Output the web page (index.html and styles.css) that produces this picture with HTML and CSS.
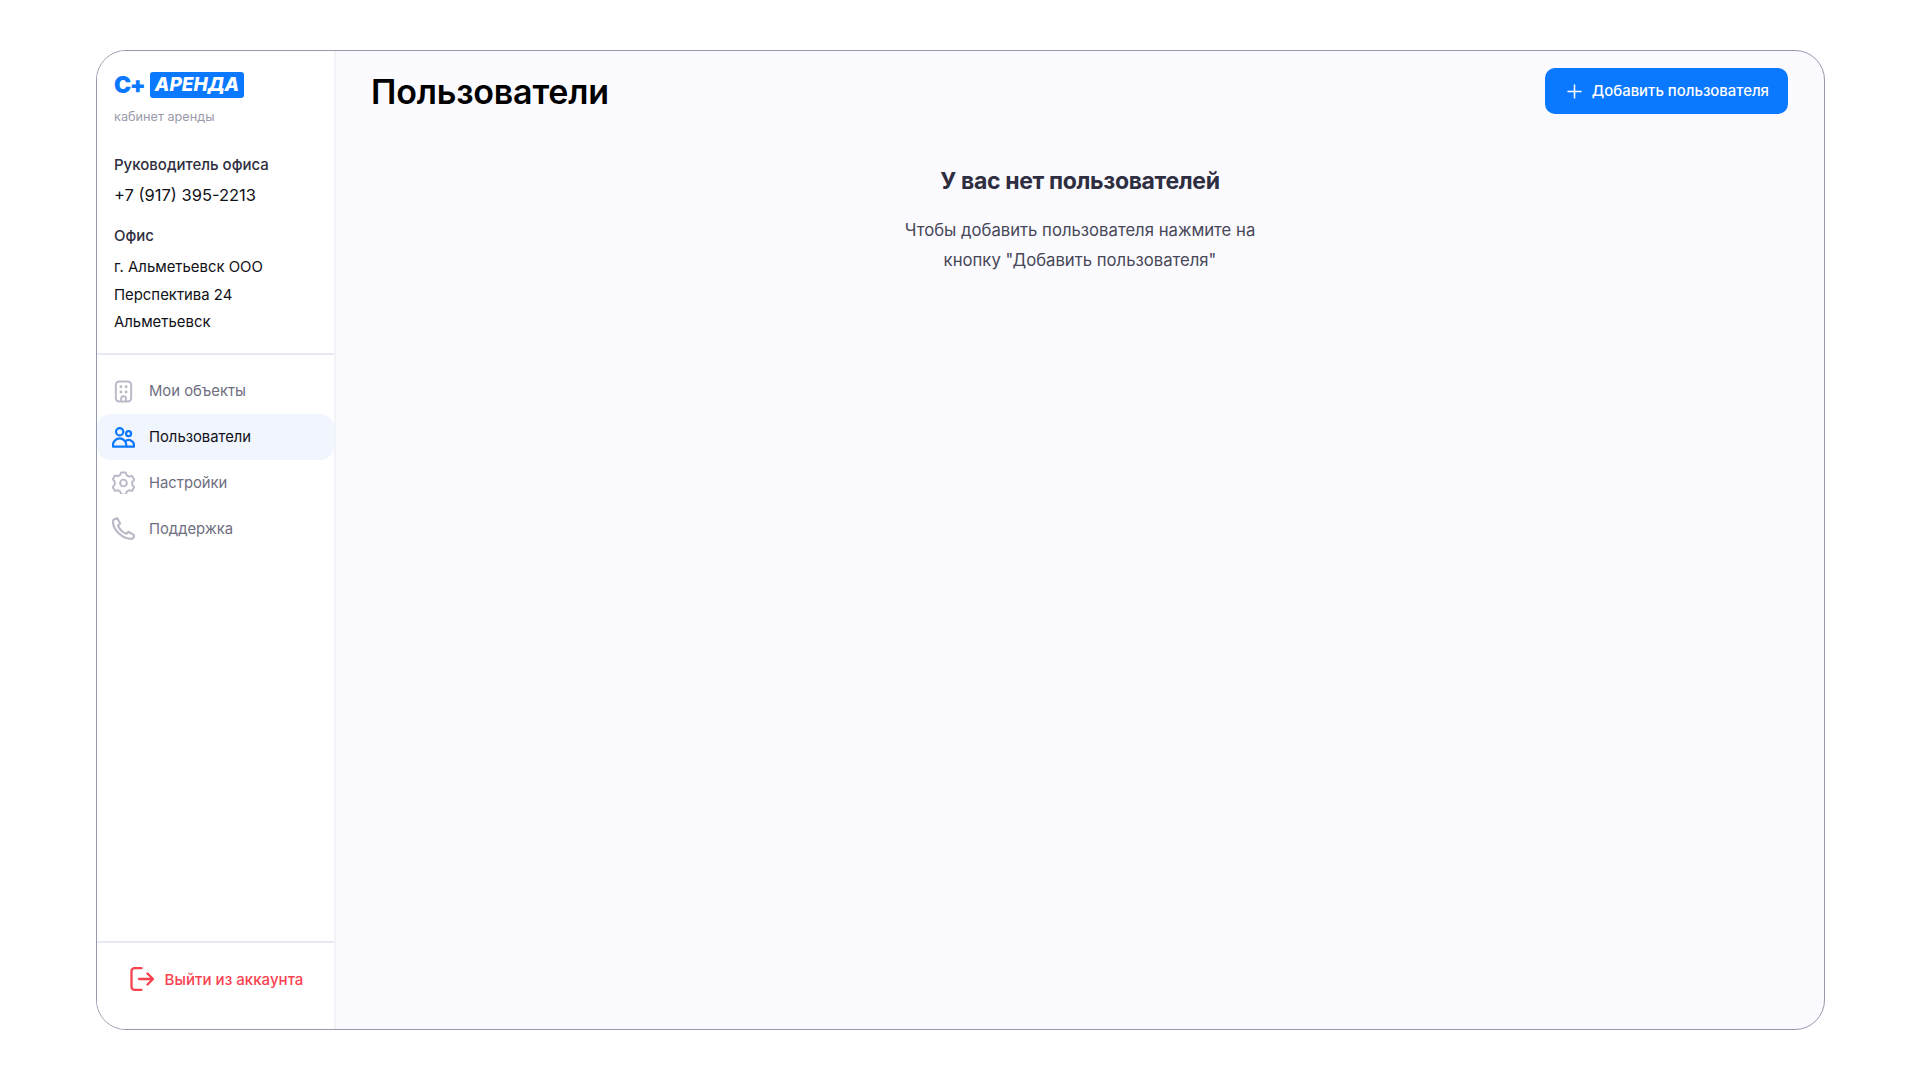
FILE: index.html
```html
<!DOCTYPE html>
<html lang="ru">
<head>
	<meta charset="utf-8">
	<title>Пользователи</title>
	<link rel="stylesheet" href="styles.css">
</head>
<body>
	<div class="frame">
		<aside class="sidebar">
			<div class="sidebar-top">
				<div class="logo"><span class="logo-mark">С+</span><span class="logo-badge">АРЕНДА</span></div>
				<div class="logo-sub">кабинет аренды</div>
				<div class="info-label">Руководитель офиса</div>
				<div class="info-phone">+7 (917) 395-2213</div>
				<div class="info-label info-label-office">Офис</div>
				<div class="info-line info-line-first">г. Альметьевск ООО</div>
				<div class="info-line">Перспектива 24</div>
				<div class="info-line">Альметьевск</div>
			</div>
			<ul class="nav">
				<li class="nav-item">
					<svg class="nav-icon" viewBox="0 0 24 24" fill="none" stroke="#b9b9c8" stroke-width="2"><rect x="4" y="1.500" width="16" height="21" rx="3.500"/><path d="M9.500 22.500v-3a2.500 2.500 0 0 1 5 0v3"/><g fill="#b9b9c8" stroke="none"><circle cx="9.300" cy="7" r="1.500"/><circle cx="14.700" cy="7" r="1.500"/><circle cx="9.300" cy="12.500" r="1.500"/><circle cx="14.700" cy="12.500" r="1.500"/></g></svg>
					Мои объекты
				</li>
				<li class="nav-item active">
					<svg class="nav-icon" viewBox="0 0 24 24" fill="none" stroke="#0a78ff" stroke-width="2.300"><circle cx="8" cy="6" r="3.800"/><circle cx="17.300" cy="8" r="2.600"/><path d="M1 21.500v-1.500a7 7 0 0 1 14 0v1.500z" stroke-linejoin="round"/><path d="M15 21.500h8v-1.500a5.500 5.500 0 0 0-9.200-4" stroke-linejoin="round"/></svg>
					Пользователи
				</li>
				<li class="nav-item">
					<svg class="nav-icon" viewBox="0 0 24 24" fill="none" stroke="#b9b9c8" stroke-width="2" stroke-linejoin="round"><path d="M9.600 1.500h4.800l1 3 2.500 1.400 3-.7 2.300 4-2.100 2.300v3l2.100 2.300-2.300 4-3-.7-2.500 1.400-1 3H9.600l-1-3-2.500-1.400-3 .7-2.300-4L2.900 14v-3L.8 8.700l2.300-4 3 .7 2.500-1.400z"/><circle cx="12" cy="12.500" r="3.500"/></svg>
					Настройки
				</li>
				<li class="nav-item">
					<svg class="nav-icon" viewBox="0 0 24 24" fill="none" stroke="#b9b9c8" stroke-width="2.200" stroke-linejoin="round"><path d="M2 2.500 5.500 1.200l3 5.500-2.300 2.100c1.300 3.600 4.500 7 8.600 8.800l2.400-2.200 5.700 3.600c.4 1.600-.8 3.800-2.400 3.800C10.500 22.800 1 13 1 5c0-.9.300-1.900 1-2.500z"/></svg>
					Поддержка
				</li>
			</ul>
			<div class="sidebar-bottom">
				<div class="logout">
					<svg class="logout-icon" viewBox="0 0 24 24" fill="none" stroke="#f8414f" stroke-width="2.300" stroke-linecap="round" stroke-linejoin="round"><path d="M11.500 1.200H4.500a3 3 0 0 0-3 3v15.600a3 3 0 0 0 3 3h7"/><path d="M9 12h14M17.500 6.500 23 12l-5.500 5.500"/></svg>
					Выйти из аккаунта
				</div>
			</div>
		</aside>
		<main class="content">
			<header class="content-head">
				<h1 class="page-title">Пользователи</h1>
				<button class="add-btn">
					<svg class="add-icon" viewBox="0 0 16 16" fill="none" stroke="#ffffff" stroke-width="1.700"><path d="M8 .5v15M.5 8h15"/></svg>
					Добавить пользователя
				</button>
			</header>
			<section class="empty">
				<h2 class="empty-title">У вас нет пользователей</h2>
				<p class="empty-text">Чтобы добавить пользователя нажмите на<br>кнопку "Добавить пользователя"</p>
			</section>
		</main>
	</div>
</body>
</html>
```

FILE: styles.css
```css
* { box-sizing: border-box; }
html, body { height: 100%; }
body { margin: 0; padding: 50px 95px 50px 96px; background: #ffffff; color: #000000;
	font-family: Inter, "Liberation Sans", sans-serif; }

.frame { display: flex; height: 980px; border: 1px solid #9499ad; border-radius: 30px;
	overflow: hidden; background: #fafaff; }

.sidebar { display: flex; flex-direction: column; width: 239px; flex: none; background: #ffffff;
	border-right: 2px solid #f2f2f9; }
.sidebar-top { height: 304px; padding: 21px 17px 0; border-bottom: 2px solid #e9e9f4; }

.logo { display: flex; align-items: center; height: 26px; gap: 7px; }
.logo-mark { width: 29px; flex: none; font-size: 23px; line-height: 26px; font-weight: 900; color: #0a78ff; letter-spacing: -1.500px; }
.logo-badge { width: 94px; height: 26px; border-radius: 3px; background: #0a78ff; color: #ffffff;
	font-size: 19px; line-height: 26px; font-weight: 800; font-style: italic; text-align: center; }
.logo-sub { margin-top: 10px; margin-bottom: 27px; font-size: 12.700px; line-height: 18px; color: #9b9bab; }

.info-label { font-size: 15px; line-height: 24px; font-weight: 500; color: #2e2e40; }
.info-label-office { margin-top: 16px; }
.info-phone { margin-top: 6px; font-size: 16.500px; line-height: 25px; color: #111118; }
.info-line { margin-top: 2.500px; font-size: 14.900px; line-height: 25px; color: #111118; }
.info-line-first { margin-top: 7px; }

.nav { flex: 1; margin: 0; padding: 13.500px 0 0; list-style: none; }
.nav-item { display: flex; align-items: center; height: 45.800px; padding-left: 15px; gap: 14px;
	font-size: 14.800px; color: #6e6e80; }
.nav-item.active { background: #f0f5fe; border-radius: 14px; color: #111118; }
.nav-icon { width: 23px; height: 23px; flex: none; }

.sidebar-bottom { display: flex; justify-content: center; height: 88px; padding: 24px 0 0 2px;
	border-top: 2px solid #e9e9f4; }
.logout { display: flex; align-items: center; height: 24px; gap: 11px; font-size: 15.100px; font-weight: 500; color: #f8414f; }
.logout-icon { width: 24px; height: 24px; }

.content { flex: 1; display: flex; flex-direction: column; }
.content-head { display: flex; justify-content: space-between; align-items: flex-start;
	padding: 17px 36px 0 35px; }
.page-title { margin: 0; font-size: 34px; line-height: 48px; font-weight: 600; letter-spacing: -0.200px; }
.add-btn { display: flex; align-items: center; gap: 10px; height: 46px; padding: 0 19px 0 22px; border: 0;
	border-radius: 10px; background: #0a78ff; color: #ffffff; font: 500 14.900px Inter, "Liberation Sans", sans-serif; }
.add-icon { width: 15px; height: 15px; }

.empty { margin-top: 48px; text-align: center; }
.empty-title { margin: 0; font-size: 23px; line-height: 34px; font-weight: 700; color: #2e2e40; letter-spacing: -0.350px; }
.empty-text { margin: 17px 0 0; font-size: 16.700px; line-height: 30px; color: #474757; }
```
